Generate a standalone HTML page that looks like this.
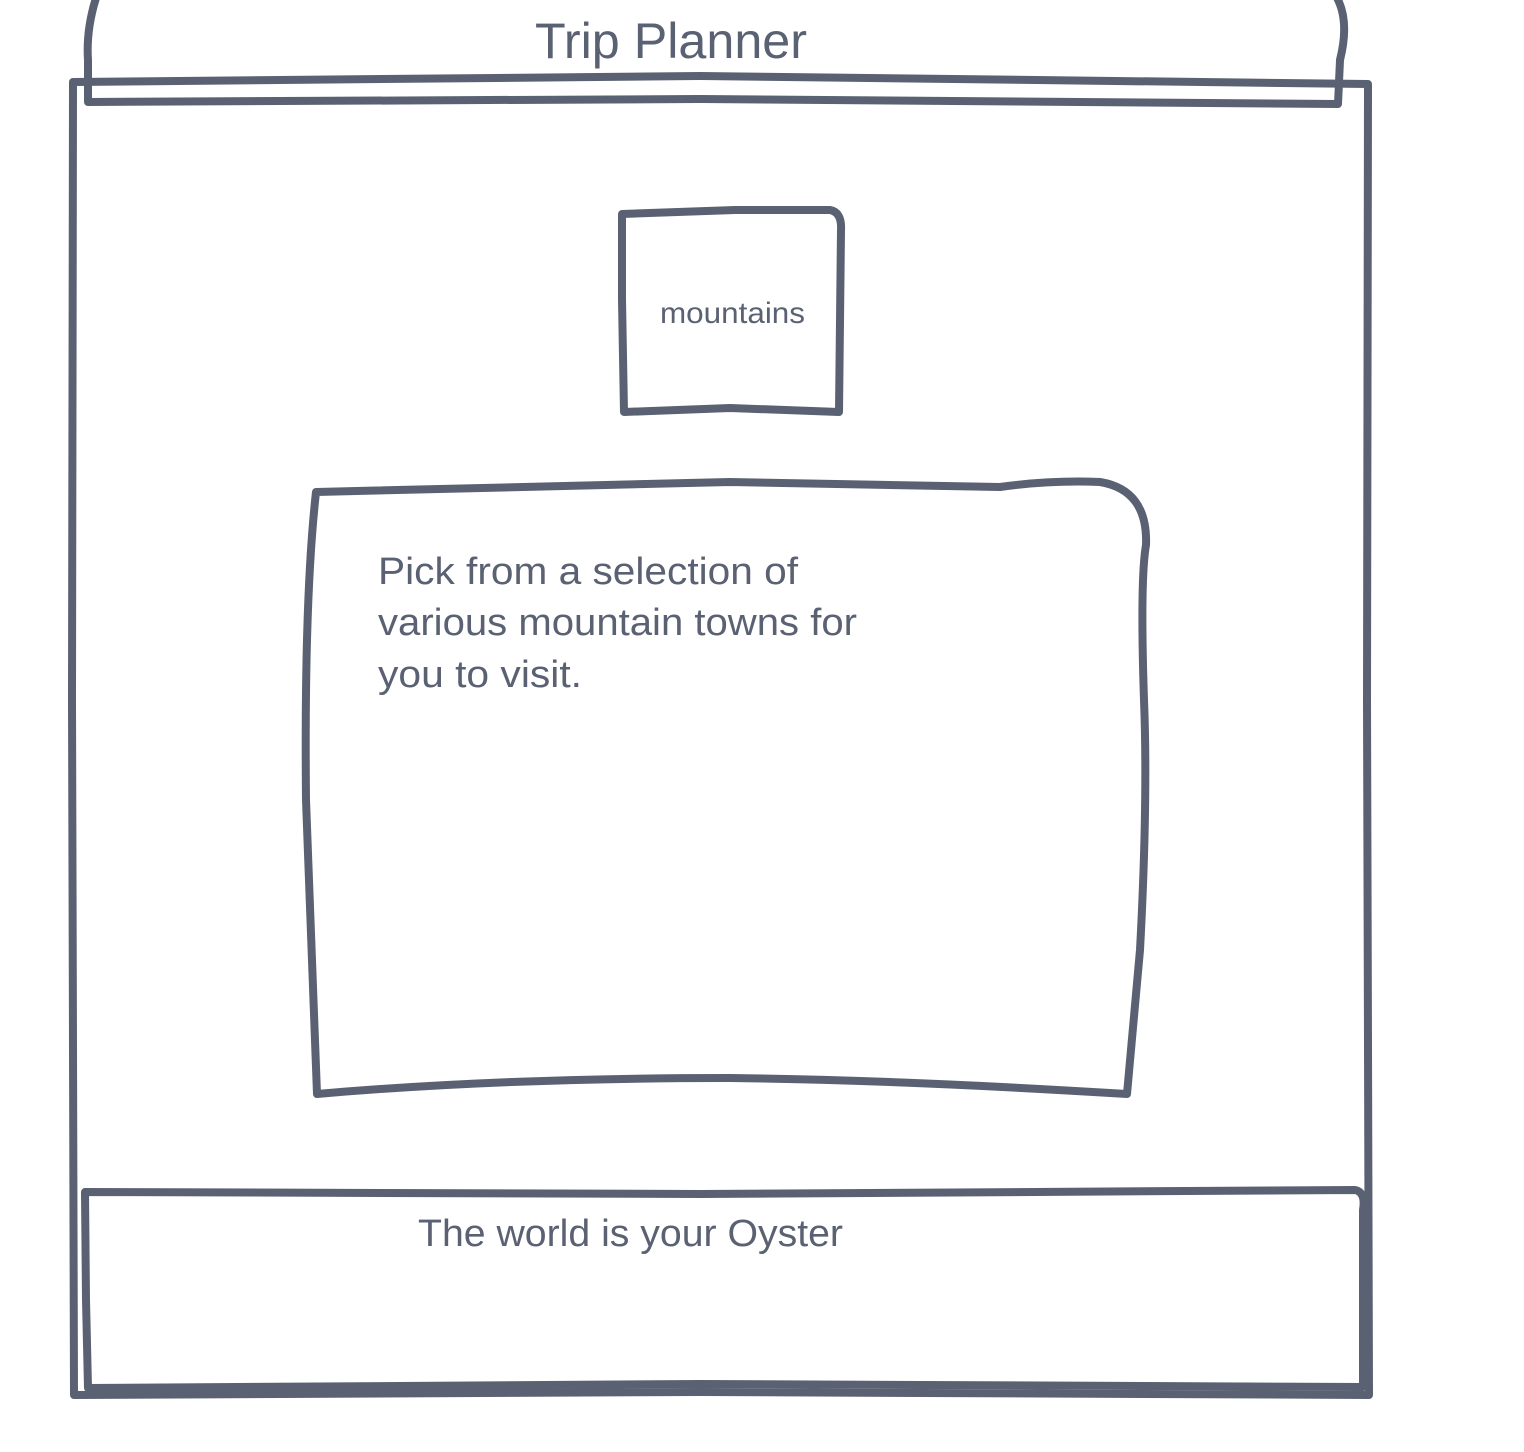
<!DOCTYPE html>
<html><head><meta charset="utf-8"><style>
html,body{margin:0;padding:0;background:#fff;width:1524px;height:1452px;overflow:hidden}
svg{display:block}
text{font-family:"Liberation Sans",sans-serif;fill:#5a6172}
</style></head><body>
<svg width="1524" height="1452" viewBox="0 0 1524 1452" xmlns="http://www.w3.org/2000/svg">
<g fill="none" stroke="#5a6172" stroke-width="8" stroke-linecap="round" stroke-linejoin="round">
<path d="M96 -2 Q86 30 88 60 L88 102 L700 99 L1338 104 L1340 60 Q1350 20 1336 -4"/>
<path d="M73 82 L700 76 L1368 84 L1367 700 L1369 1395 L700 1392 L74 1395 L72 700 Z"/>
<path d="M622 214 L735 210 L830 210 Q842 212 841 230 L839 412 L730 408 L624 412 L622 300 Z"/>
<path d="M316 492 L730 482 L1000 487 Q1050 480 1100 482 Q1148 490 1146 545 Q1140 580 1144 700 Q1148 800 1140 950 L1127 1094 Q900 1080 730 1078 Q500 1078 317 1094 L306 800 Q304 600 316 492 Z"/>
<path d="M85 1192 L700 1194 L1355 1190 Q1366 1192 1363 1210 L1363 1387 L700 1384 L88 1388 L86 1300 Z"/>
</g>
<text x="535" y="58" font-size="50" textLength="272" lengthAdjust="spacingAndGlyphs">Trip Planner</text>
<text x="660" y="323" font-size="30" textLength="145" lengthAdjust="spacingAndGlyphs">mountains</text>
<text x="378" y="584" font-size="38" textLength="420" lengthAdjust="spacingAndGlyphs">Pick from a selection of</text>
<text x="378" y="635" font-size="38" textLength="479" lengthAdjust="spacingAndGlyphs">various mountain towns for</text>
<text x="378" y="687" font-size="38" textLength="204" lengthAdjust="spacingAndGlyphs">you to visit.</text>
<text x="418" y="1246" font-size="38" textLength="425" lengthAdjust="spacingAndGlyphs">The world is your Oyster</text>
</svg>
</body></html>
